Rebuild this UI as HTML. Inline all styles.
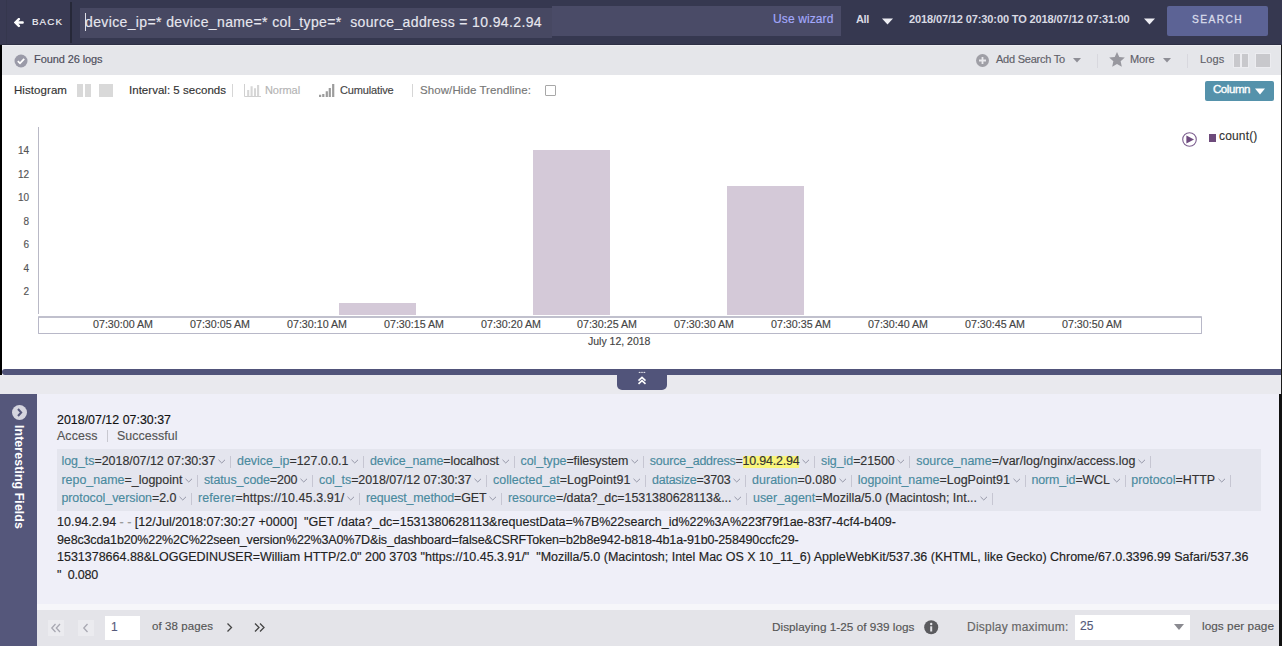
<!DOCTYPE html>
<html><head><meta charset="utf-8"><title>LogPoint Search</title>
<style>
*{box-sizing:border-box;margin:0;padding:0}
html,body{width:1282px;height:646px;overflow:hidden;background:#fff;font-family:"Liberation Sans",sans-serif;position:relative;-webkit-text-stroke:0.15px currentColor}
.a{position:absolute;white-space:pre;line-height:1}
.fname{color:#4a8a9e}
.fval{color:#333}
.ylab{position:absolute;font-size:10px;color:#555;line-height:1;text-align:right;width:20px;left:9px}
.xlab{position:absolute;font-size:10.7px;color:#444;line-height:1;white-space:pre}
.row{position:absolute;height:18px;display:flex;align-items:center;white-space:pre;font-size:12.45px;line-height:18px}
.chev{display:block;width:7.5px;height:5px;margin-left:2.8px;flex:none;position:relative;top:0.5px}
.sep{display:block;width:1px;height:12px;background:#c6c6d2;margin-left:4.5px;flex:none;position:relative;top:1px}
.raw{position:absolute;left:57px;font-size:12.5px;line-height:18px;color:#222;white-space:pre}
</style></head><body>
<div class="a" style="left:0px;top:0px;width:1282px;height:45px;background:#363850;"></div>
<div class="a" style="left:0px;top:0px;width:70px;height:44px;background:#393a53;"></div>
<div class="a" style="left:6px;top:0px;width:1px;height:44px;background:#35374d;"></div>
<div class="a" style="left:0px;top:44px;width:1282px;height:1px;background:#2e3045;"></div>
<svg class="a" style="left:14px;top:18px" width="10" height="10" viewBox="0.5 0.5 10.5 10.5"><path d="M5.6 1.6 L2 5.2 L5.6 8.8 M2.4 5.2 H9.6" stroke="#fff" stroke-width="2.5" fill="none" stroke-linejoin="miter" stroke-linecap="round"/></svg>
<div class="a" style="left:32px;top:17px;font-size:9.8px;color:#f4f4f8;letter-spacing:1.078px;">BACK</div>
<div class="a" style="left:70px;top:2px;width:2px;height:41px;background:#262838;"></div>
<div class="a" style="left:80px;top:8px;width:472px;height:30px;background:#474862;"></div>
<div class="a" style="left:552px;top:6px;width:289px;height:30px;background:#4a4b67;"></div>
<div class="a" style="left:85px;top:15px;font-size:14px;color:#e6e6ee;letter-spacing:0.373px;">device_ip=* device_name=* col_type=*  source_address = 10.94.2.94</div>
<div class="a" style="left:85px;top:13px;width:1px;height:18px;background:#e0e0e8;"></div>
<div class="a" style="left:773px;top:13px;font-size:12px;color:#a4a9fc;letter-spacing:0.114px;">Use wizard</div>
<div class="a" style="left:856px;top:14px;font-size:11px;color:#d9dae3;letter-spacing:-0.354px;font-weight:700;-webkit-text-stroke:0;">All</div>
<svg class="a" style="left:882px;top:18px" width="11" height="7" viewBox="0 0 11 7"><path d="M0 0.5 H11 L5.5 6.5Z" fill="#eeeef4"/></svg>
<div class="a" style="left:909px;top:14px;font-size:11px;color:#d9dae3;letter-spacing:-0.119px;font-weight:700;-webkit-text-stroke:0;">2018/07/12 07:30:00 TO 2018/07/12 07:31:00</div>
<svg class="a" style="left:1144px;top:18px" width="11" height="7" viewBox="0 0 11 7"><path d="M0 0.5 H11 L5.5 6.5Z" fill="#eeeef4"/></svg>
<div class="a" style="left:1167px;top:6px;width:101px;height:30px;background:#5c6395;border-radius:2px;"></div>
<div class="a" style="left:1192px;top:15px;font-size:10.2px;color:#d8dbea;letter-spacing:1.422px;-webkit-text-stroke:0.3px #d8dbea;">SEARCH</div>
<div class="a" style="left:0px;top:45px;width:1282px;height:30px;background:#e5e6ea;"></div>
<div class="a" style="left:0px;top:45px;width:1282px;height:1px;background:#eeeef2;"></div>
<svg class="a" style="left:14px;top:54px" width="14" height="14" viewBox="0 0 14 14"><circle cx="7" cy="7" r="6.5" fill="#9a9aa8"/><path d="M3.8 7.2 L6 9.3 L10.2 4.9" stroke="#fff" stroke-width="1.8" fill="none"/></svg>
<div class="a" style="left:34px;top:54px;font-size:11px;color:#4c4c5a;letter-spacing:-0.094px;">Found 26 logs</div>
<svg class="a" style="left:976px;top:54px" width="14" height="13" viewBox="0 0 14 13"><circle cx="6.5" cy="6.5" r="6.5" fill="#9f9fa6"/><path d="M6.5 3 V10 M3 6.5 H10" stroke="#e8e8ec" stroke-width="1.8"/></svg>
<div class="a" style="left:996px;top:54px;font-size:11px;color:#606068;letter-spacing:-0.228px;">Add Search To</div>
<svg class="a" style="left:1073px;top:58px" width="8" height="5" viewBox="0 0 8 5"><path d="M0 0 H8 L4 4.5Z" fill="#8e8e96"/></svg>
<div class="a" style="left:1097px;top:54px;width:1px;height:14px;background:#d8d8de;"></div>
<svg class="a" style="left:1109px;top:52px" width="16" height="15" viewBox="0 0 24 23"><path d="M12 0 L15.5 7.8 L24 8.6 L17.6 14.3 L19.4 22.7 L12 18.4 L4.6 22.7 L6.4 14.3 L0 8.6 L8.5 7.8Z" fill="#98989f"/></svg>
<div class="a" style="left:1130px;top:54px;font-size:11px;color:#606068;letter-spacing:-0.141px;">More</div>
<svg class="a" style="left:1163px;top:58px" width="8" height="5" viewBox="0 0 8 5"><path d="M0 0 H8 L4 4.5Z" fill="#8e8e96"/></svg>
<div class="a" style="left:1187px;top:54px;width:1px;height:14px;background:#d8d8de;"></div>
<div class="a" style="left:1200px;top:54px;font-size:11px;color:#606068;letter-spacing:0.160px;">Logs</div>
<div class="a" style="left:1233px;top:53px;width:16px;height:15px;background:#ececf0;"></div>
<div class="a" style="left:1255px;top:53px;width:16px;height:15px;background:#ececf0;"></div>
<div class="a" style="left:1234px;top:54px;width:6px;height:13px;background:#c8c8cc;"></div>
<div class="a" style="left:1242px;top:54px;width:6px;height:13px;background:#c8c8cc;"></div>
<div class="a" style="left:1256px;top:54px;width:14px;height:13px;background:#c8c8cc;"></div>
<div class="a" style="left:0px;top:75px;width:1282px;height:294px;background:#fff;"></div>
<div class="a" style="left:14px;top:85px;font-size:11.5px;color:#333;letter-spacing:0.066px;">Histogram</div>
<div class="a" style="left:77px;top:84px;width:6px;height:13px;background:#d9d9d9;"></div>
<div class="a" style="left:85px;top:84px;width:6px;height:13px;background:#d9d9d9;"></div>
<div class="a" style="left:99px;top:84px;width:14px;height:13px;background:#d9d9d9;"></div>
<div class="a" style="left:129px;top:85px;font-size:11.5px;color:#333;letter-spacing:0.025px;">Interval: 5 seconds</div>
<div class="a" style="left:232px;top:84px;width:1px;height:13px;background:#d6d6d6;"></div>
<svg class="a" style="left:244px;top:84px" width="17" height="13" viewBox="0 0 17 13"><path d="M0.5 0 V12.5 H17" stroke="#d0d0d0" fill="none"/><path d="M4.2 12 V6 M7.6 12 V2.2 M11 12 V4.3 M14.1 12 V1" stroke="#d6d6d6" stroke-width="2.1"/></svg>
<div class="a" style="left:265px;top:85px;font-size:11px;color:#b4b4b4;letter-spacing:-0.076px;">Normal</div>
<svg class="a" style="left:319px;top:84px" width="16" height="13" viewBox="0 0 16 13"><path d="M1.1 13 V10.7 M4.3 13 V9.9 M7.8 13 V7.3 M10.8 13 V4.1 M14.2 13 V0" stroke="#9c9c9c" stroke-width="2.2"/></svg>
<div class="a" style="left:340px;top:85px;font-size:11px;color:#444;letter-spacing:-0.153px;">Cumulative</div>
<div class="a" style="left:412px;top:84px;width:1px;height:13px;background:#d6d6d6;"></div>
<div class="a" style="left:420px;top:85px;font-size:11.5px;color:#777;letter-spacing:0.084px;">Show/Hide Trendline:</div>
<div class="a" style="left:545px;top:85px;width:11px;height:11px;background:#fff;border:1px solid #a8a8a8;border-radius:1px;"></div>
<div class="a" style="left:1205px;top:81px;width:69px;height:20px;background:#5592ab;border-radius:2px;"></div>
<div class="a" style="left:1213px;top:84px;font-size:11.5px;color:#fff;letter-spacing:-0.440px;-webkit-text-stroke:0.35px #fff;">Column</div>
<svg class="a" style="left:1255px;top:88px" width="10" height="7" viewBox="0 0 10 7"><path d="M0 0.5 H10 L5 6.5Z" fill="#fff"/></svg>
<div class="a" style="left:38px;top:127px;width:1px;height:187px;background:#b9b9c6;"></div>
<div class="ylab" style="top:146px">14</div>
<div class="ylab" style="top:170px">12</div>
<div class="ylab" style="top:193px">10</div>
<div class="ylab" style="top:217px">8</div>
<div class="ylab" style="top:240px">6</div>
<div class="ylab" style="top:264px">4</div>
<div class="ylab" style="top:287px">2</div>
<div class="a" style="left:339px;top:303px;width:77px;height:12px;background:#d4c9d8;"></div>
<div class="a" style="left:533px;top:150px;width:77px;height:165px;background:#d4c9d8;"></div>
<div class="a" style="left:727px;top:186px;width:77px;height:129px;background:#d4c9d8;"></div>
<div class="a" style="left:38px;top:316px;width:1164px;height:18px;background:transparent;border:1px solid #b8b8c8;border-top:2px solid #c0c0cd;border-radius:1px;"></div>
<div class="xlab" style="left:93px;top:319px">07:30:00 AM</div>
<div class="xlab" style="left:190px;top:319px">07:30:05 AM</div>
<div class="xlab" style="left:287px;top:319px">07:30:10 AM</div>
<div class="xlab" style="left:384px;top:319px">07:30:15 AM</div>
<div class="xlab" style="left:481px;top:319px">07:30:20 AM</div>
<div class="xlab" style="left:577px;top:319px">07:30:25 AM</div>
<div class="xlab" style="left:674px;top:319px">07:30:30 AM</div>
<div class="xlab" style="left:771px;top:319px">07:30:35 AM</div>
<div class="xlab" style="left:868px;top:319px">07:30:40 AM</div>
<div class="xlab" style="left:965px;top:319px">07:30:45 AM</div>
<div class="xlab" style="left:1062px;top:319px">07:30:50 AM</div>
<div class="xlab" style="left:588px;top:336px;font-size:10.5px">July 12, 2018</div>
<svg class="a" style="left:1182px;top:132px" width="16" height="16" viewBox="0 0 16 16"><circle cx="7.5" cy="7.5" r="6.8" stroke="#7d6090" stroke-width="1.1" fill="none"/><path d="M4.4 3.4 L12 7.5 L4.4 11.6Z" fill="#6e4a7e"/></svg>
<div class="a" style="left:1209px;top:134px;width:7px;height:8px;background:#6d4a7b;"></div>
<div class="a" style="left:1219px;top:130px;font-size:12px;color:#333;letter-spacing:0.163px;">count()</div>
<div class="a" style="left:0px;top:45px;width:2px;height:330px;background:#000;"></div>
<div class="a" style="left:1281px;top:45px;width:1px;height:601px;background:#1a1a1a;"></div>
<div class="a" style="left:2px;top:369px;width:1279px;height:6px;background:#51547a;border-radius:3px 0 0 3px;"></div>
<div class="a" style="left:0px;top:375px;width:1281px;height:19px;background:#e9e9ee;"></div>
<div class="a" style="left:0px;top:394px;width:37px;height:252px;background:#55577b;"></div>
<div class="a" style="left:37px;top:394px;width:1243px;height:210px;background:#efeff8;"></div>
<div class="a" style="left:37px;top:604px;width:1243px;height:6px;background:#f6f6fa;"></div>
<div class="a" style="left:37px;top:610px;width:1243px;height:36px;background:#e4e4e9;"></div>
<div class="a" style="left:1279px;top:394px;width:3px;height:252px;background:#111;"></div>
<div class="a" style="left:617px;top:369px;width:50px;height:21px;background:#51547a;border-radius:0 0 5px 5px;"></div>
<svg class="a" style="left:637px;top:371px" width="10" height="14" viewBox="0 0 10 14"><path d="M2.3 1.4 h0.01 M4.1 1.4 h0.01 M5.9 1.4 h0.01 M7.7 1.4 h0.01" stroke="#fff" stroke-width="1.1" stroke-linecap="round"/><path d="M1.5 9.6 L5 6.4 L8.5 9.6 M1.5 12.8 L5 9.6 L8.5 12.8" stroke="#fff" stroke-width="1.6" fill="none"/></svg>
<div class="a" style="left:12px;top:405px;width:15px;height:15px;background:#d5d5df;border-radius:50%;"></div>
<svg class="a" style="left:12px;top:405px" width="15" height="15" viewBox="0 0 15 15"><path d="M6 4 L9.2 7.5 L6 11" stroke="#55577b" stroke-width="2" fill="none"/></svg>
<div class="a" style="left:25px;top:425px;font-size:12.4px;color:#fff;letter-spacing:0.078px;font-weight:700;-webkit-text-stroke:0;transform-origin:0 0;transform:rotate(90deg);">Interesting Fields</div>
<div class="a" style="left:57px;top:414px;font-size:12.4px;color:#111;letter-spacing:0.016px;">2018/07/12 07:30:37</div>
<div class="a" style="left:57px;top:430px;font-size:12.4px;color:#555;letter-spacing:0.094px;">Access</div>
<div class="a" style="left:107px;top:430px;width:1px;height:12px;background:#c8c8d0;"></div>
<div class="a" style="left:117px;top:430px;font-size:12.4px;color:#555;letter-spacing:0.058px;">Successful</div>
<div class="a" style="left:57px;top:449px;width:1204px;height:62px;background:#e4e5ee;"></div>
<div class="row" style="left:61.4px;top:452px;letter-spacing:-0.022px"><span class="fname">log_ts</span><span class="fval">=2018/07/12 07:30:37</span><svg class="chev" viewBox="0 0 7.5 5"><path d="M0.5 0.8 L3.75 4 L7 0.8" stroke="#9496a6" stroke-width="1" fill="none"/></svg><span class="sep"></span></div>
<div class="row" style="left:237px;top:452px;letter-spacing:-0.015px"><span class="fname">device_ip</span><span class="fval">=127.0.0.1</span><svg class="chev" viewBox="0 0 7.5 5"><path d="M0.5 0.8 L3.75 4 L7 0.8" stroke="#9496a6" stroke-width="1" fill="none"/></svg><span class="sep"></span></div>
<div class="row" style="left:370px;top:452px;letter-spacing:-0.064px"><span class="fname">device_name</span><span class="fval">=localhost</span><svg class="chev" viewBox="0 0 7.5 5"><path d="M0.5 0.8 L3.75 4 L7 0.8" stroke="#9496a6" stroke-width="1" fill="none"/></svg><span class="sep"></span></div>
<div class="row" style="left:520.6px;top:452px;letter-spacing:-0.068px"><span class="fname">col_type</span><span class="fval">=filesystem</span><svg class="chev" viewBox="0 0 7.5 5"><path d="M0.5 0.8 L3.75 4 L7 0.8" stroke="#9496a6" stroke-width="1" fill="none"/></svg><span class="sep"></span></div>
<div class="row" style="left:649.8px;top:452px;letter-spacing:-0.198px"><span class="fname">source_address</span><span class="fval">=<span style="background:linear-gradient(#f9f57c,#f9f57c) 0 2px/100% 12px no-repeat">10.94.2.94</span></span><svg class="chev" viewBox="0 0 7.5 5"><path d="M0.5 0.8 L3.75 4 L7 0.8" stroke="#9496a6" stroke-width="1" fill="none"/></svg><span class="sep"></span></div>
<div class="row" style="left:821px;top:452px;letter-spacing:-0.063px"><span class="fname">sig_id</span><span class="fval">=21500</span><svg class="chev" viewBox="0 0 7.5 5"><path d="M0.5 0.8 L3.75 4 L7 0.8" stroke="#9496a6" stroke-width="1" fill="none"/></svg><span class="sep"></span></div>
<div class="row" style="left:916.2px;top:452px;letter-spacing:0.010px"><span class="fname">source_name</span><span class="fval">=/var/log/nginx/access.log</span><svg class="chev" viewBox="0 0 7.5 5"><path d="M0.5 0.8 L3.75 4 L7 0.8" stroke="#9496a6" stroke-width="1" fill="none"/></svg><span class="sep"></span></div>
<div class="row" style="left:61.4px;top:471px;letter-spacing:0.017px"><span class="fname">repo_name</span><span class="fval">=_logpoint</span><svg class="chev" viewBox="0 0 7.5 5"><path d="M0.5 0.8 L3.75 4 L7 0.8" stroke="#9496a6" stroke-width="1" fill="none"/></svg><span class="sep"></span></div>
<div class="row" style="left:204px;top:471px;letter-spacing:-0.113px"><span class="fname">status_code</span><span class="fval">=200</span><svg class="chev" viewBox="0 0 7.5 5"><path d="M0.5 0.8 L3.75 4 L7 0.8" stroke="#9496a6" stroke-width="1" fill="none"/></svg><span class="sep"></span></div>
<div class="row" style="left:319px;top:471px;letter-spacing:-0.057px"><span class="fname">col_ts</span><span class="fval">=2018/07/12 07:30:37</span><svg class="chev" viewBox="0 0 7.5 5"><path d="M0.5 0.8 L3.75 4 L7 0.8" stroke="#9496a6" stroke-width="1" fill="none"/></svg><span class="sep"></span></div>
<div class="row" style="left:493px;top:471px;letter-spacing:0.036px"><span class="fname">collected_at</span><span class="fval">=LogPoint91</span><svg class="chev" viewBox="0 0 7.5 5"><path d="M0.5 0.8 L3.75 4 L7 0.8" stroke="#9496a6" stroke-width="1" fill="none"/></svg><span class="sep"></span></div>
<div class="row" style="left:652px;top:471px;letter-spacing:-0.220px"><span class="fname">datasize</span><span class="fval">=3703</span><svg class="chev" viewBox="0 0 7.5 5"><path d="M0.5 0.8 L3.75 4 L7 0.8" stroke="#9496a6" stroke-width="1" fill="none"/></svg><span class="sep"></span></div>
<div class="row" style="left:752px;top:471px;letter-spacing:0.054px"><span class="fname">duration</span><span class="fval">=0.080</span><svg class="chev" viewBox="0 0 7.5 5"><path d="M0.5 0.8 L3.75 4 L7 0.8" stroke="#9496a6" stroke-width="1" fill="none"/></svg><span class="sep"></span></div>
<div class="row" style="left:857.7px;top:471px;letter-spacing:0.017px"><span class="fname">logpoint_name</span><span class="fval">=LogPoint91</span><svg class="chev" viewBox="0 0 7.5 5"><path d="M0.5 0.8 L3.75 4 L7 0.8" stroke="#9496a6" stroke-width="1" fill="none"/></svg><span class="sep"></span></div>
<div class="row" style="left:1031.5px;top:471px;letter-spacing:-0.149px"><span class="fname">norm_id</span><span class="fval">=WCL</span><svg class="chev" viewBox="0 0 7.5 5"><path d="M0.5 0.8 L3.75 4 L7 0.8" stroke="#9496a6" stroke-width="1" fill="none"/></svg><span class="sep"></span></div>
<div class="row" style="left:1131.3px;top:471px;letter-spacing:-0.014px"><span class="fname">protocol</span><span class="fval">=HTTP</span><svg class="chev" viewBox="0 0 7.5 5"><path d="M0.5 0.8 L3.75 4 L7 0.8" stroke="#9496a6" stroke-width="1" fill="none"/></svg><span class="sep"></span></div>
<div class="row" style="left:61.4px;top:489px;letter-spacing:-0.041px"><span class="fname">protocol_version</span><span class="fval">=2.0</span><svg class="chev" viewBox="0 0 7.5 5"><path d="M0.5 0.8 L3.75 4 L7 0.8" stroke="#9496a6" stroke-width="1" fill="none"/></svg><span class="sep"></span></div>
<div class="row" style="left:198px;top:489px;letter-spacing:0.109px"><span class="fname">referer</span><span class="fval">=https://10.45.3.91/</span><svg class="chev" viewBox="0 0 7.5 5"><path d="M0.5 0.8 L3.75 4 L7 0.8" stroke="#9496a6" stroke-width="1" fill="none"/></svg><span class="sep"></span></div>
<div class="row" style="left:366px;top:489px;letter-spacing:-0.129px"><span class="fname">request_method</span><span class="fval">=GET</span><svg class="chev" viewBox="0 0 7.5 5"><path d="M0.5 0.8 L3.75 4 L7 0.8" stroke="#9496a6" stroke-width="1" fill="none"/></svg><span class="sep"></span></div>
<div class="row" style="left:508px;top:489px;letter-spacing:-0.051px"><span class="fname">resource</span><span class="fval">=/data?_dc=1531380628113&amp;...</span><svg class="chev" viewBox="0 0 7.5 5"><path d="M0.5 0.8 L3.75 4 L7 0.8" stroke="#9496a6" stroke-width="1" fill="none"/></svg><span class="sep"></span></div>
<div class="row" style="left:753px;top:489px;letter-spacing:-0.008px"><span class="fname">user_agent</span><span class="fval">=Mozilla/5.0 (Macintosh; Int...</span><svg class="chev" viewBox="0 0 7.5 5"><path d="M0.5 0.8 L3.75 4 L7 0.8" stroke="#9496a6" stroke-width="1" fill="none"/></svg><span class="sep"></span></div>
<div class="raw" style="top:513.0px;letter-spacing:0.000px">10.94.2.94 <span style="color:#999">- -</span> [12/Jul/2018:07:30:27 +0000]  &quot;GET /data?_dc=1531380628113&amp;requestData=%7B%22search_id%22%3A%223f79f1ae-83f7-4cf4-b409-</div>
<div class="raw" style="top:530.7px;letter-spacing:-0.139px">9e8c3cda1b20%22%2C%22seen_version%22%3A0%7D&amp;is_dashboard=false&amp;CSRFToken=b2b8e942-b818-4b1a-91b0-258490ccfc29-</div>
<div class="raw" style="top:548.4px;letter-spacing:-0.009px">1531378664.88&amp;LOGGEDINUSER=William HTTP/2.0&quot; 200 3703 &quot;https://10.45.3.91/&quot;  &quot;Mozilla/5.0 (Macintosh; Intel Mac OS X 10_11_6) AppleWebKit/537.36 (KHTML, like Gecko) Chrome/67.0.3396.99 Safari/537.36</div>
<div class="raw" style="top:566.1px;letter-spacing:-0.209px">&quot;  0.080</div>
<div class="a" style="left:48px;top:620px;width:16px;height:16px;background:#ebebef;"></div>
<div class="a" style="left:78px;top:620px;width:16px;height:16px;background:#ebebef;"></div>
<svg class="a" style="left:50px;top:622px" width="12" height="12" viewBox="0 0 12 12"><path d="M5.5 2 L1.8 6 L5.5 10 M10 2 L6.3 6 L10 10" stroke="#a8a8b2" stroke-width="1.3" fill="none"/></svg>
<svg class="a" style="left:80px;top:622px" width="12" height="12" viewBox="0 0 12 12"><path d="M7.5 2 L3.8 6 L7.5 10" stroke="#a8a8b2" stroke-width="1.3" fill="none"/></svg>
<div class="a" style="left:105px;top:616px;width:35px;height:24px;background:#fff;"></div>
<div class="a" style="left:111px;top:621px;font-size:12px;color:#555a7a;letter-spacing:0.000px;">1</div>
<div class="a" style="left:152px;top:621px;font-size:11.5px;color:#555;letter-spacing:0.081px;">of 38 pages</div>
<svg class="a" style="left:224px;top:621px" width="12" height="12" viewBox="0 0 12 12"><path d="M3.5 2.5 L7.5 6.5 L3.5 10.5" stroke="#444" stroke-width="1.3" fill="none"/></svg>
<svg class="a" style="left:253px;top:621px" width="14" height="12" viewBox="0 0 14 12"><path d="M2 2.5 L6 6.5 L2 10.5 M7 2.5 L11 6.5 L7 10.5" stroke="#444" stroke-width="1.3" fill="none"/></svg>
<div class="a" style="left:772px;top:621px;font-size:11.75px;color:#555;letter-spacing:0.028px;">Displaying 1-25 of 939 logs</div>
<svg class="a" style="left:924px;top:620px" width="15" height="15" viewBox="0 0 15 15"><circle cx="7.2" cy="7.2" r="7" fill="#5a5a5e"/><circle cx="7.2" cy="4" r="1.2" fill="#e4e4e9"/><path d="M7.2 6.3 V11.5" stroke="#e4e4e9" stroke-width="2"/></svg>
<div class="a" style="left:967px;top:621px;font-size:12px;color:#666;letter-spacing:0.218px;">Display maximum:</div>
<div class="a" style="left:1075px;top:615px;width:115px;height:25px;background:#fff;"></div>
<div class="a" style="left:1080px;top:620px;font-size:12px;color:#555a7a;letter-spacing:0.000px;">25</div>
<svg class="a" style="left:1174px;top:624px" width="10" height="6" viewBox="0 0 10 6"><path d="M0 0 H10 L5 6Z" fill="#8a8a90"/></svg>
<div class="a" style="left:1202px;top:621px;font-size:11.8px;color:#555;letter-spacing:0.038px;">logs per page</div>
</body></html>
